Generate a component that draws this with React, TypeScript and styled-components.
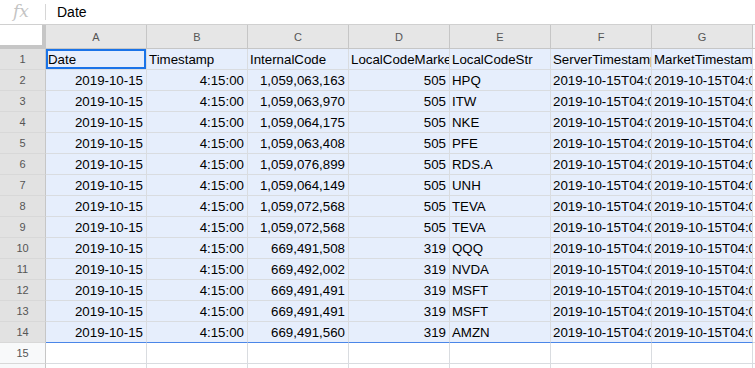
import React from "react";
import styled, { createGlobalStyle } from "styled-components";

const GlobalStyle = createGlobalStyle`
  html, body {
    margin: 0;
    padding: 0;
    background: #ffffff;
    overflow: hidden;
  }
  body {
    font-family: "Liberation Sans", Arial, sans-serif;
  }
`;

const columns = ["A", "B", "C", "D", "E", "F", "G", "H"];

const headerCells = [
  "Date",
  "Timestamp",
  "InternalCode",
  "LocalCodeMarket",
  "LocalCodeStr",
  "ServerTimestamp",
  "MarketTimestamp",
  "",
];

const rows = [
  ["1,059,063,163", "505", "HPQ"],
  ["1,059,063,970", "505", "ITW"],
  ["1,059,064,175", "505", "NKE"],
  ["1,059,063,408", "505", "PFE"],
  ["1,059,076,899", "505", "RDS.A"],
  ["1,059,064,149", "505", "UNH"],
  ["1,059,072,568", "505", "TEVA"],
  ["1,059,072,568", "505", "TEVA"],
  ["669,491,508", "319", "QQQ"],
  ["669,492,002", "319", "NVDA"],
  ["669,491,491", "319", "MSFT"],
  ["669,491,491", "319", "MSFT"],
  ["669,491,560", "319", "AMZN"],
];

const App: React.FC = () => {
  return (
    <>
      <GlobalStyle />
      <Page>
        <FormulaBar>
          <FxLabel>fx</FxLabel>
          <FxDivider />
          <FormulaValue>Date</FormulaValue>
        </FormulaBar>
        <Sheet>
          <Row>
            <Corner />
            {columns.map((c, i) => (
              <ColHeader key={c} selected={i < 7}>
                {c}
              </ColHeader>
            ))}
          </Row>

          <Row>
            <RowHeader selected>1</RowHeader>
            {headerCells.map((t, i) => (
              <Cell key={i} selected={i < 7} active={i === 0}>
                {t}
              </Cell>
            ))}
          </Row>

          {rows.map((r, idx) => {
            const last = idx === rows.length - 1;
            return (
              <Row key={idx}>
                <RowHeader selected>{idx + 2}</RowHeader>
                <Cell selected align="right" last={last}>
                  2019-10-15
                </Cell>
                <Cell selected align="right" last={last}>
                  4:15:00
                </Cell>
                <Cell selected align="right" last={last}>
                  {r[0]}
                </Cell>
                <Cell selected align="right" last={last}>
                  {r[1]}
                </Cell>
                <Cell selected last={last}>
                  {r[2]}
                </Cell>
                <Cell selected last={last}>
                  2019-10-15T04:00:00.000
                </Cell>
                <Cell selected last={last}>
                  2019-10-15T04:00:00.000
                </Cell>
                <Cell />
              </Row>
            );
          })}

          <Row>
            <RowHeader>15</RowHeader>
            {columns.map((c) => (
              <Cell key={c} />
            ))}
          </Row>
          <Row>
            <RowHeader>16</RowHeader>
            {columns.map((c) => (
              <Cell key={c} />
            ))}
          </Row>
        </Sheet>
      </Page>
    </>
  );
};

export default App;

const Page = styled.div`
  width: 755px;
  height: 368px;
  overflow: hidden;
  background: #ffffff;
`;

const FormulaBar = styled.div`
  height: 24px;
  display: flex;
  align-items: center;
  border-bottom: 1px solid #d0d0d0;
  background: #ffffff;
`;

const FxLabel = styled.div`
  width: 45px;
  padding-left: 13px;
  box-sizing: border-box;
  font-family: "DejaVu Serif", "Liberation Serif", serif;
  font-style: italic;
  font-size: 17px;
  color: #c4c4c4;
  margin-top: -3px;
`;

const FxDivider = styled.div`
  width: 1px;
  height: 16px;
  background: #d6d6d6;
`;

const FormulaValue = styled.div`
  padding-left: 11px;
  font-size: 14px;
  color: #000000;
`;

const Sheet = styled.div`
  display: flex;
  flex-direction: column;
`;

const Row = styled.div`
  display: flex;
  flex-shrink: 0;
`;

const Corner = styled.div`
  width: 42px;
  height: 20px;
  flex-shrink: 0;
  background: #ffffff;
  border-right: 4px solid #c6c6c6;
  border-bottom: 4px solid #c6c6c6;
`;

const ColHeader = styled.div<{ selected?: boolean }>`
  width: 100px;
  height: 23px;
  flex-shrink: 0;
  display: flex;
  align-items: center;
  justify-content: center;
  font-size: 11px;
  color: #555555;
  background: ${(p) => (p.selected ? "#e6e6e6" : "#f8f9fa")};
  border-right: 1px solid #c6c6c6;
  border-bottom: 1px solid #c6c6c6;
`;

const RowHeader = styled.div<{ selected?: boolean }>`
  width: 45px;
  height: 20px;
  flex-shrink: 0;
  display: flex;
  align-items: center;
  justify-content: center;
  font-size: 11px;
  color: #555555;
  background: ${(p) => (p.selected ? "#e2e2e2" : "#f8f9fa")};
  border-right: 1px solid #c6c6c6;
  border-bottom: 1px solid #d8d8d8;
`;

const Cell = styled.div<{
  selected?: boolean;
  active?: boolean;
  last?: boolean;
  align?: "left" | "right";
}>`
  position: relative;
  width: 96px;
  height: 20px;
  flex-shrink: 0;
  padding: 0 2px;
  display: flex;
  align-items: center;
  justify-content: ${(p) => (p.align === "right" ? "flex-end" : "flex-start")};
  font-size: 13.3px;
  color: #000000;
  white-space: nowrap;
  overflow: hidden;
  background: ${(p) => (p.selected ? "#e6eefc" : "#ffffff")};
  border-right: 1px solid #d9dce0;
  border-bottom: 1px solid ${(p) => (p.last ? "#4a86e8" : "#d9dce0")};

  ${(p) =>
    p.align === "right" &&
    `
    padding-right: 3px;
    padding-left: 1px;
  `}

  ${(p) =>
    p.active &&
    `
    &::after {
      content: "";
      position: absolute;
      left: 0;
      top: 0;
      right: 0;
      bottom: 0;
      border: 2px solid #1a73e8;
      pointer-events: none;
    }
  `}
`;
